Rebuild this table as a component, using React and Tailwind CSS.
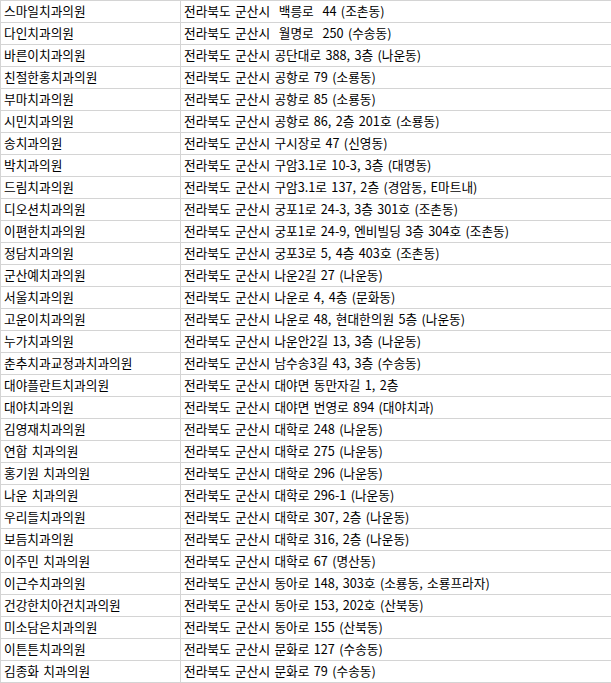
import React from 'react';

const rows = [
  ['스마일치과의원', '전라북도 군산시  백릉로  44 (조촌동)'],
  ['다인치과의원', '전라북도 군산시  월명로  250 (수송동)'],
  ['바른이치과의원', '전라북도 군산시 공단대로 388, 3층 (나운동)'],
  ['친절한홍치과의원', '전라북도 군산시 공항로 79 (소룡동)'],
  ['부마치과의원', '전라북도 군산시 공항로 85 (소룡동)'],
  ['시민치과의원', '전라북도 군산시 공항로 86, 2층 201호 (소룡동)'],
  ['송치과의원', '전라북도 군산시 구시장로 47 (신영동)'],
  ['박치과의원', '전라북도 군산시 구암3.1로 10-3, 3층 (대명동)'],
  ['드림치과의원', '전라북도 군산시 구암3.1로 137, 2층 (경암동, E마트내)'],
  ['디오션치과의원', '전라북도 군산시 궁포1로 24-3, 3층 301호 (조촌동)'],
  ['이편한치과의원', '전라북도 군산시 궁포1로 24-9, 엔비빌딩 3층 304호 (조촌동)'],
  ['정담치과의원', '전라북도 군산시 궁포3로 5, 4층 403호 (조촌동)'],
  ['군산예치과의원', '전라북도 군산시 나운2길 27 (나운동)'],
  ['서울치과의원', '전라북도 군산시 나운로 4, 4층 (문화동)'],
  ['고운이치과의원', '전라북도 군산시 나운로 48, 현대한의원 5층 (나운동)'],
  ['누가치과의원', '전라북도 군산시 나운안2길 13, 3층 (나운동)'],
  ['춘추치과교정과치과의원', '전라북도 군산시 남수송3길 43, 3층 (수송동)'],
  ['대야플란트치과의원', '전라북도 군산시 대야면 동만자길 1, 2층'],
  ['대야치과의원', '전라북도 군산시 대야면 번영로 894 (대야치과)'],
  ['김영재치과의원', '전라북도 군산시 대학로 248 (나운동)'],
  ['연합 치과의원', '전라북도 군산시 대학로 275 (나운동)'],
  ['홍기원 치과의원', '전라북도 군산시 대학로 296 (나운동)'],
  ['나운 치과의원', '전라북도 군산시 대학로 296-1 (나운동)'],
  ['우리들치과의원', '전라북도 군산시 대학로 307, 2층 (나운동)'],
  ['보듬치과의원', '전라북도 군산시 대학로 316, 2층 (나운동)'],
  ['이주민 치과의원', '전라북도 군산시 대학로 67 (명산동)'],
  ['이근수치과의원', '전라북도 군산시 동아로 148, 303호 (소룡동, 소룡프라자)'],
  ['건강한치아건치과의원', '전라북도 군산시 동아로 153, 202호 (산북동)'],
  ['미소담은치과의원', '전라북도 군산시 동아로 155 (산북동)'],
  ['이튼튼치과의원', '전라북도 군산시 문화로 127 (수송동)'],
  ['김종화 치과의원', '전라북도 군산시 문화로 79 (수송동)'],
];

const App = () => {
  return (
    <div
      className="w-[611px] bg-white text-[12.7px] text-black border-t border-[#d4d4d4] [word-spacing:1.5px]"
      style={{ fontFamily: '"Noto Sans CJK KR", "Noto Sans", sans-serif' }}
    >
      {rows.map(([name, addr], i) => (
        <div key={i} className="flex h-[22px] border-b border-l border-[#d4d4d4]">
          <div className="w-[180px] shrink-0 border-r border-[#d4d4d4] pl-[3px] flex items-center whitespace-pre leading-none">
            {name}
          </div>
          <div className="flex-1 pl-[3px] flex items-center whitespace-pre leading-none">
            {addr}
          </div>
        </div>
      ))}
    </div>
  );
};

export default App;
